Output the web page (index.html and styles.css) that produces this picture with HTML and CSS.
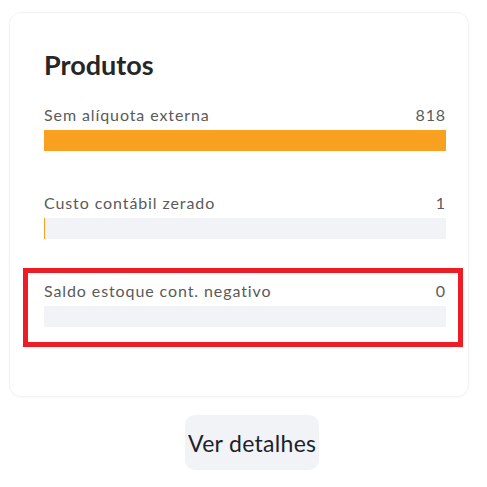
FILE: index.html
```html
<!DOCTYPE html>
<html lang="pt">
<head>
<meta charset="utf-8">
<link rel="stylesheet" href="styles.css">
</head>
<body>
<div class="page">
  <section class="card">
    <h2 class="title">Produtos</h2>
    <div class="rows">
      <div class="row">
        <div class="row-head"><span>Sem alíquota externa</span><span>818</span></div>
        <div class="bar"><div class="fill" style="width:100%"></div></div>
      </div>
      <div class="row">
        <div class="row-head"><span>Custo contábil zerado</span><span>1</span></div>
        <div class="bar"><div class="fill" style="width:0.25%"></div></div>
      </div>
      <div class="row highlighted">
        <div class="row-head"><span>Saldo estoque cont. negativo</span><span>0</span></div>
        <div class="bar"><div class="fill" style="width:0%"></div></div>
        <div class="mark"></div>
      </div>
    </div>
  </section>
  <div class="footer">
    <button class="details">Ver detalhes</button>
  </div>
</div>
</body>
</html>
```
FILE: styles.css
```css
html, body {
  margin: 0;
  padding: 0;
  background: #ffffff;
  font-family: Lato, "Noto Sans", sans-serif;
}
.page {
  padding: 12px 18px 0 9px;
}
.card {
  box-sizing: border-box;
  width: 460px;
  height: 385px;
  border: 1px solid #f2f2f4;
  border-radius: 12px;
  padding: 35px 22px 0 34px;
  box-shadow: 0 1px 2px rgba(0,0,0,0.03);
}
.title {
  margin: 0;
  font-size: 27px;
  line-height: 34px;
  font-weight: 700;
  color: #262626;
}
.rows {
  margin-top: 23px;
  display: flex;
  flex-direction: column;
  gap: 42px;
}
.row {
  position: relative;
  display: flex;
  flex-direction: column;
  gap: 5px;
}
.row-head {
  display: flex;
  justify-content: space-between;
  font-size: 16px;
  line-height: 20px;
  letter-spacing: 0.9px;
  color: #5a5a5a;
}
.bar {
  height: 21px;
  background: #f2f3f7;
}
.fill {
  height: 100%;
  background: #f8a01f;
}
.mark {
  position: absolute;
  left: -21px;
  right: -17px;
  top: -13px;
  bottom: -20px;
  border: 5px solid #ee1c25;
}
.footer {
  padding: 18px 0 0 176px;
}
.details {
  height: 55px;
  padding: 0 3px;
  border: none;
  border-radius: 10px;
  background: #f2f3f7;
  font-family: Lato, "Noto Sans", sans-serif;
  font-size: 23px;
  letter-spacing: 0.3px;
  color: #1c1f2e;
}
```
